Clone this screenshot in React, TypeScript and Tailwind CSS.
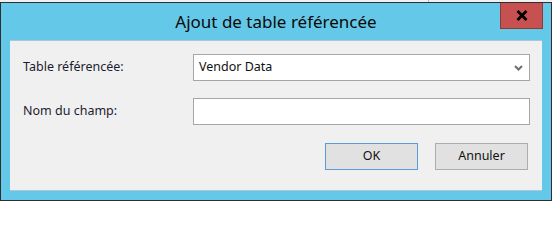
import React from "react";

export default function App() {
  const font = { fontFamily: '"Noto Sans", "Open Sans", Arial, sans-serif' };
  return (
    <div className="w-[552px] h-[201px] bg-[#f0f0f0] flex flex-col" style={font}>
      <div className="h-[2px] shrink-0 flex">
        <div className="ml-[428px] w-[1px] h-[2px] bg-[#bdbdbd]" />
      </div>
      <div className="relative w-[552px] flex-1 min-h-0 border border-[#2e2e2e] bg-[#64c8e8] flex flex-col">
        <div className="h-[37px] shrink-0 flex items-center justify-center">
          <span className="text-[17px] text-[#0a0a0a] leading-none pb-[1px]">Ajout de table référencée</span>
        </div>
        <div className="absolute top-0 right-[8px] w-[43px] h-[26px] bg-[#c75050] border border-t-0 border-[#8c3b3b] flex items-center justify-center">
          <svg width="12" height="11" viewBox="0 0 12 11">
            <path d="M1.5 1 L10.5 10 M10.5 1 L1.5 10" stroke="#000" strokeWidth="2.7" />
          </svg>
        </div>
        <div className="mx-[9px] mb-[9px] flex-1 min-h-0 bg-[#f0f0f0] border-t border-b border-[#aac6d8] pt-[13px] pl-[13px] pr-[12px] text-[12.5px] text-[#1c1c30]">
          <div className="flex items-center h-[27px]">
            <div className="w-[170px] pb-[1px]">Table référencée:</div>
            <div className="w-[337px] h-[27px] bg-white border border-[#a6a6a6] flex items-center justify-between pl-[5px] pr-[6px] text-[#111]">
              <span className="pb-[1px]">Vendor Data</span>
              <svg width="9" height="6" viewBox="0 0 9 6">
                <path d="M1 1 L4.5 4.5 L8 1" stroke="#6e6e6e" strokeWidth="2" fill="none" />
              </svg>
            </div>
          </div>
          <div className="flex items-center h-[27px] mt-[17px]">
            <div className="w-[170px] pb-[1px]">Nom du champ:</div>
            <div className="w-[337px] h-[27px] bg-white border border-[#a6a6a6]" />
          </div>
          <div className="flex justify-end mt-[18px] gap-[17px] pr-[2px]">
            <div className="w-[93px] h-[27px] bg-[#e1e1e1] border border-[#5b9bd9] flex items-center justify-center text-[#111]">OK</div>
            <div className="w-[93px] h-[27px] bg-[#e1e1e1] border border-[#adadad] flex items-center justify-center text-[#111]">Annuler</div>
          </div>
        </div>
      </div>
    </div>
  );
}
